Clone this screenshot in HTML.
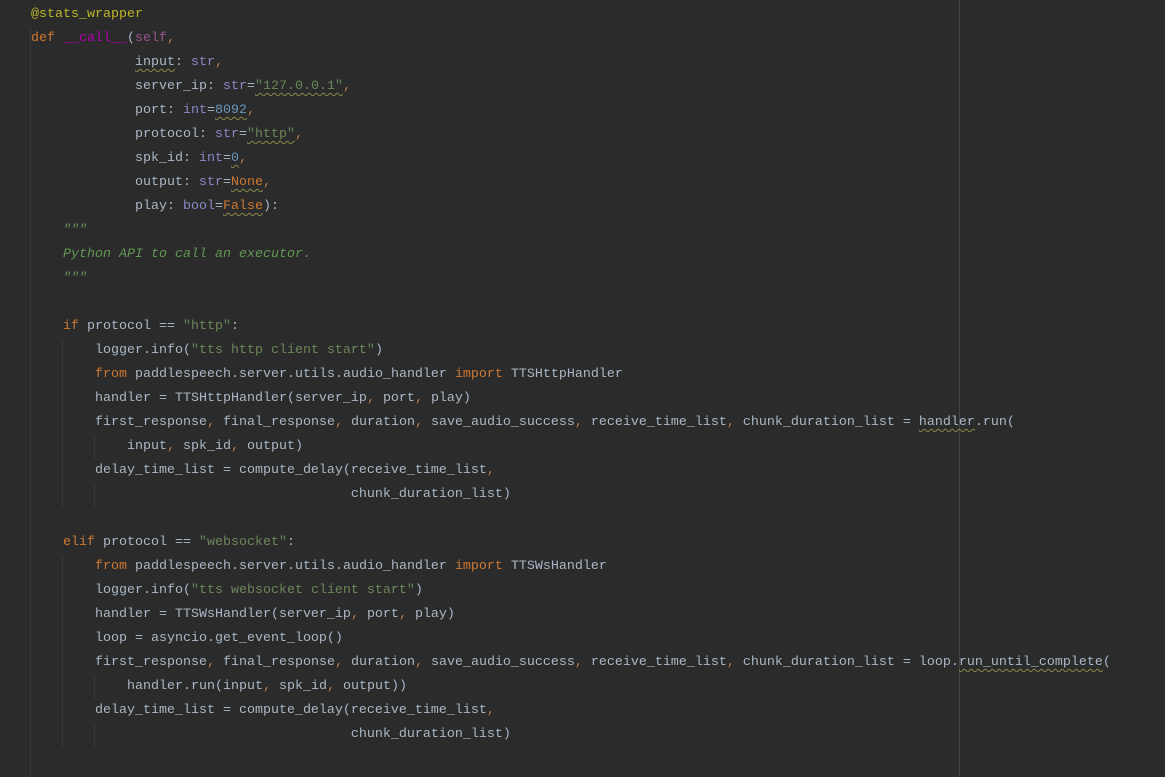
<!DOCTYPE html>
<html><head><meta charset="utf-8"><style>
html,body{margin:0;padding:0;background:#2b2b2b;width:1165px;height:777px;overflow:hidden;position:relative}
.code{position:absolute;left:31px;top:3px;font-family:"Liberation Mono",monospace;font-size:13.33px;color:#a9b7c6;white-space:pre;line-height:24px}
.k{color:#cc7832}.s{color:#6a8759}.d{color:#bbb529}.sf{color:#94558d}.m{color:#b200b2}.n{color:#6897bb}.b{color:#8888c6}.doc{color:#629755;font-style:italic}
.w{text-decoration:underline wavy #8a8a4a;text-decoration-thickness:1px;text-underline-offset:3px}
.g{position:absolute;width:1px;background:#393939}
</style></head><body>
<div class="g" style="left:30px;top:27px;height:750px"></div>
<div class="g" style="left:62px;top:339px;height:168px"></div>
<div class="g" style="left:62px;top:555px;height:192px"></div>
<div class="g" style="left:94px;top:435px;height:24px"></div>
<div class="g" style="left:94px;top:483px;height:24px"></div>
<div class="g" style="left:94px;top:675px;height:24px"></div>
<div class="g" style="left:94px;top:723px;height:24px"></div>
<div class="g" style="left:959px;top:0;height:777px;background:#454545"></div>
<div class="code"><span class="d">@stats_wrapper</span>
<span class="k">def </span><span class="m">__call__</span>(<span class="sf">self</span><span class="k">,</span>
             <span class="w">input</span>: <span class="b">str</span><span class="k">,</span>
             server_ip: <span class="b">str</span>=<span class="s w">"127.0.0.1"</span><span class="k">,</span>
             port: <span class="b">int</span>=<span class="n w">8092</span><span class="k">,</span>
             protocol: <span class="b">str</span>=<span class="s w">"http"</span><span class="k">,</span>
             spk_id: <span class="b">int</span>=<span class="n w">0</span><span class="k">,</span>
             output: <span class="b">str</span>=<span class="k w">None</span><span class="k">,</span>
             play: <span class="b">bool</span>=<span class="k w">False</span>):
    <span class="doc">"""</span>
<span class="doc">    Python API to call an executor.</span>
<span class="doc">    """</span>

    <span class="k">if </span>protocol == <span class="s">"http"</span>:
        logger.info(<span class="s">"tts http client start"</span>)
        <span class="k">from </span>paddlespeech.server.utils.audio_handler <span class="k">import </span>TTSHttpHandler
        handler = TTSHttpHandler(server_ip<span class="k">, </span>port<span class="k">, </span>play)
        first_response<span class="k">, </span>final_response<span class="k">, </span>duration<span class="k">, </span>save_audio_success<span class="k">, </span>receive_time_list<span class="k">, </span>chunk_duration_list = <span class="w">handler</span>.run(
            input<span class="k">, </span>spk_id<span class="k">, </span>output)
        delay_time_list = compute_delay(receive_time_list<span class="k">,</span>
                                        chunk_duration_list)

    <span class="k">elif </span>protocol == <span class="s">"websocket"</span>:
        <span class="k">from </span>paddlespeech.server.utils.audio_handler <span class="k">import </span>TTSWsHandler
        logger.info(<span class="s">"tts websocket client start"</span>)
        handler = TTSWsHandler(server_ip<span class="k">, </span>port<span class="k">, </span>play)
        loop = asyncio.get_event_loop()
        first_response<span class="k">, </span>final_response<span class="k">, </span>duration<span class="k">, </span>save_audio_success<span class="k">, </span>receive_time_list<span class="k">, </span>chunk_duration_list = loop.<span class="w">run_until_complete</span>(
            handler.run(input<span class="k">, </span>spk_id<span class="k">, </span>output))
        delay_time_list = compute_delay(receive_time_list<span class="k">,</span>
                                        chunk_duration_list)
</div>
</body></html>
